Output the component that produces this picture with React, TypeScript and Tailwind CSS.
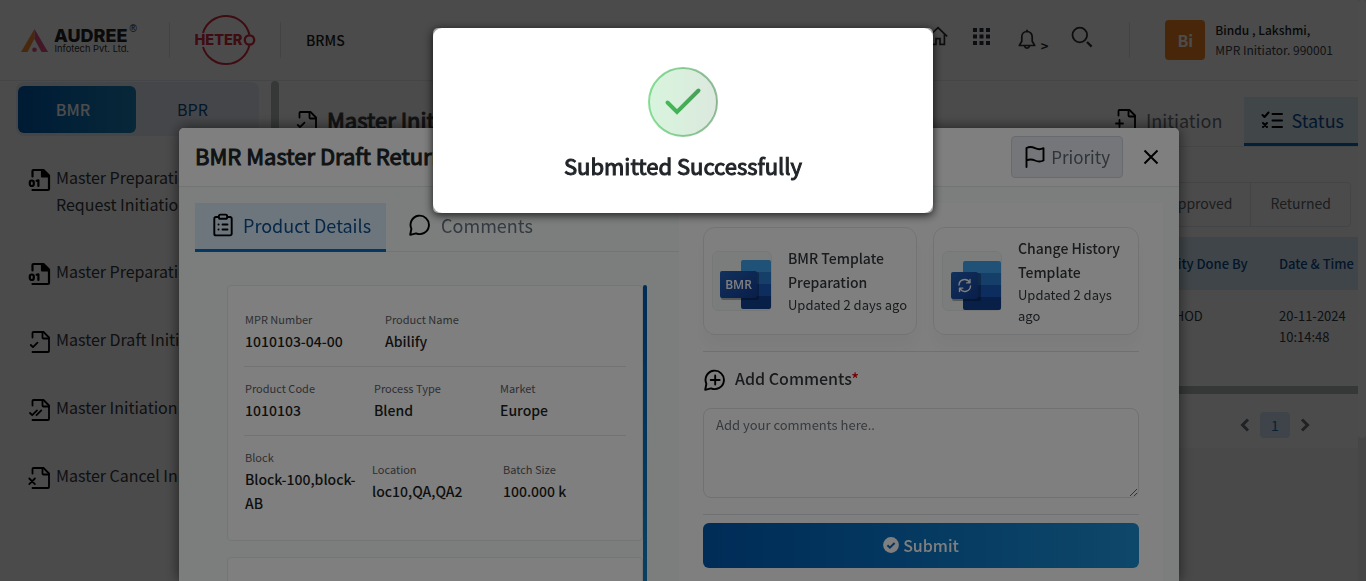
import React from "react";

type IconProps = { className?: string };

/* ---------- icons ---------- */

function FileBase({ className, children }: IconProps & { children?: React.ReactNode }) {
  return (
    <svg viewBox="0 0 24 24" className={className} fill="none" stroke="currentColor" strokeWidth="1.8" strokeLinecap="round" strokeLinejoin="round" aria-hidden="true">
      <path d="M4.500 7.500V3a1 1 0 0 1 1-1h10l5.500 5.500V21a1 1 0 0 1-1 1H4.500" />
      <path d="M14.500 2v5.500a1 1 0 0 0 1 1H21" />
      {children}
    </svg>
  );
}
const FileCheck = (p: IconProps) => (
  <FileBase {...p}><path d="M2.800 15l2.200 2.200 4.500-4.500" /></FileBase>
);
const FileChecks = (p: IconProps) => (
  <FileBase {...p}><path d="M2 15l2.200 2.200 4.800-4.800M8.500 17.200l4.800-4.800" /></FileBase>
);
const FileCross = (p: IconProps) => (
  <FileBase {...p}><path d="M1.300 12.500l5.600 5.600M6.900 12.500l-5.600 5.600" /></FileBase>
);
const FilePlus = (p: IconProps) => (
  <FileBase {...p}><path d="M5.500 12v7M2 15.500h7" /></FileBase>
);
const FileOne = ({ className }: IconProps) => (
  <svg viewBox="0 0 24 24" className={className} fill="none" stroke="currentColor" strokeWidth="2.200" strokeLinecap="round" strokeLinejoin="round" aria-hidden="true">
    <path d="M4.500 8.500V3a1 1 0 0 1 1-1h10l5.500 5.500V21a1 1 0 0 1-1 1H4.500" />
    <path d="M14 2v6.500h7z" fill="currentColor" />
    <rect x="1.800" y="12.500" width="4" height="5.500" rx="2" />
    <path d="M8.600 12.800l1.800-.5V18" />
  </svg>
);
const HomeIcon = ({ className }: IconProps) => (
  <svg viewBox="0 0 24 24" className={className} fill="none" stroke="currentColor" strokeWidth="1.8" aria-hidden="true">
    <path d="M2 12.500L12 3l10 9.500M5 10v11.200h4.800v-6.400h4.400v6.400H19V10" />
  </svg>
);
const GridIcon = ({ className }: IconProps) => (
  <svg viewBox="0 0 17 17" className={className} fill="currentColor" aria-hidden="true">
    {[0, 6.5, 13].map((y) => [0, 6.5, 13].map((x) => <rect key={`${x}-${y}`} x={x} y={y} width="4" height="4" />))}
  </svg>
);
const BellIcon = ({ className }: IconProps) => (
  <svg viewBox="0 0 20 22" className={className} fill="none" stroke="currentColor" strokeWidth="1.700" strokeLinejoin="round" strokeLinecap="round" aria-hidden="true">
    <path d="M10 2.500c-3.200 0-5.200 2.400-5.200 5.400v4.300L2.300 16.500h15.400l-2.500-4.300V7.900c0-3-2-5.400-5.200-5.400zM10 2.500V1.400M7.600 17.300a2.500 2.500 0 0 0 4.800 0" />
  </svg>
);
const SearchIcon = ({ className }: IconProps) => (
  <svg viewBox="0 0 22 22" className={className} fill="none" stroke="currentColor" strokeWidth="1.800" aria-hidden="true">
    <circle cx="8.800" cy="9" r="7.300" />
    <path d="M16 16l4.600 4.600" strokeWidth="2.200" />
  </svg>
);
const ListChecks = ({ className }: IconProps) => (
  <svg viewBox="0 0 22 18" className={className} fill="none" stroke="currentColor" strokeWidth="2" strokeLinecap="round" strokeLinejoin="round" aria-hidden="true">
    <path d="M11.500 3H21M11.500 9.500H21M11.500 16H21M1.500 4l2 2 4-4.500M2 12l4 4M6 12l-4 4" />
  </svg>
);
const ClipboardIcon = ({ className }: IconProps) => (
  <svg viewBox="0 0 20 24" className={className} fill="none" stroke="currentColor" strokeWidth="1.900" strokeLinecap="round" strokeLinejoin="round" aria-hidden="true">
    <path d="M5.500 4H3a1.700 1.700 0 0 0-1.700 1.700v15A1.700 1.700 0 0 0 3 22.400h14a1.700 1.700 0 0 0 1.700-1.700v-15A1.700 1.700 0 0 0 17 4h-2.500" />
    <rect x="5.800" y="1.600" width="8.400" height="4.200" rx="1.600" />
    <path d="M5.500 11.500h.1M9.500 11.500h5M5.500 16.500h.1M9.500 16.500h5" />
  </svg>
);
const ChatIcon = ({ className, plus }: IconProps & { plus?: boolean }) => (
  <svg viewBox="0 0 22 22" className={className} fill="none" stroke="currentColor" strokeWidth="1.900" strokeLinecap="round" strokeLinejoin="round" aria-hidden="true">
    <path d="M1.200 20.800l1.200-6A9.200 9.200 0 1 1 7 19.300z" />
    {plus && <path d="M11.200 6.500v9M6.700 11h9" />}
  </svg>
);
const FlagIcon = ({ className }: IconProps) => (
  <svg viewBox="0 0 20 22" className={className} fill="none" stroke="currentColor" strokeWidth="1.900" strokeLinecap="round" strokeLinejoin="round" aria-hidden="true">
    <path d="M1.500 21V2c3-1.500 6-1 8.500.2s5.500 1.500 8.500 0v12.300c-3 1.500-6 1.200-8.500 0s-5.500-1.500-8.500 0" />
  </svg>
);
const BadgeCheck = ({ className }: IconProps) => (
  <svg viewBox="0 0 16 16" className={className} aria-hidden="true">
    <circle cx="8" cy="8" r="7.900" fill="currentColor" />
    <path d="M4.400 8.200l2.500 2.500 4.700-4.700" fill="none" stroke="#0a69b8" strokeWidth="2" />
  </svg>
);
const Chevron = ({ className, flip }: IconProps & { flip?: boolean }) => (
  <svg viewBox="0 0 10 14" className={className} fill="none" stroke="currentColor" strokeWidth="3" aria-hidden="true">
    <path d={flip ? "M2 1.500L7.500 7 2 12.500" : "M8 1.500L2.500 7 8 12.500"} />
  </svg>
);

function WordFile({ kind }: { kind: "bmr" | "history" }) {
  const bmr = kind === "bmr";
  const left = bmr ? 28 : 20;
  const top = bmr ? 8 : 9;
  return (
    <span className="flex size-[60px] shrink-0 rounded-md border border-[#eaf0ef] bg-[#f7fbfa]">
      <svg viewBox="0 0 58 58" className="size-full" role="img" aria-label={bmr ? "BMR document" : "History document"}>
        <defs>
          <linearGradient id={`wf-${kind}`} x1="0" y1="0" x2="1" y2="1">
            <stop offset="0" stopColor="#2463b8" />
            <stop offset="1" stopColor="#123b96" />
          </linearGradient>
          <clipPath id={`wc-${kind}`}>
            <rect x={left} y={top} width={58 - left} height="49" rx="2" />
          </clipPath>
        </defs>
        <g clipPath={`url(#wc-${kind})`}>
          <rect x={left} y={top} width="40" height="13" fill="#41a5ee" />
          <rect x={left} y={top + 12} width="40" height="13" fill="#2b7cd3" />
          <rect x={left} y={top + 24} width="40" height="13" fill="#185abd" />
          <rect x={left} y={top + 36} width="40" height="13" fill="#103f91" />
        </g>
        <rect x={bmr ? 8 : 9} y={bmr ? 20 : 21} width={bmr ? 38 : 29} height="28" rx="2" fill="#000" opacity=".3" />
        <rect x={bmr ? 7 : 8} y={bmr ? 19 : 20} width={bmr ? 37 : 27} height="27" rx="2" fill={`url(#wf-${kind})`} />
        {bmr ? (
          <text x="25.500" y="37" textAnchor="middle" fontSize="12" fontWeight="600" fill="#fff" fontFamily="Open Sans, sans-serif">BMR</text>
        ) : (
          <g fill="none" stroke="#fff" strokeWidth="1.400" strokeLinecap="round" strokeLinejoin="round">
            <path d="M16 33a5.600 5.600 0 0 1 10.500-2.500M27 27.500v3.400h-3.400M27.500 34a5.600 5.600 0 0 1-10.500 2.500M16.500 39.500v-3.400h3.400" />
          </g>
        )}
      </svg>
    </span>
  );
}

/* ---------- logos ---------- */

const AudreeLogo = () => (
  <svg viewBox="0 0 120 36" className="h-9 w-[120px]" role="img" aria-label="Audree Infotech Pvt. Ltd.">
    <path d="M13.500 7v9.500L6.500 30H0z" fill="#f28a30" />
    <path d="M13.500 7L27 30h-6.500l-7-13z" fill="#e0527f" />
    <circle cx="13.500" cy="27.700" r="2.300" fill="#e0527f" />
    <text x="33" y="19.500" fontSize="18" fontWeight="800" fill="#222" fontFamily="Inter, sans-serif">AUDREE</text>
    <text x="33.500" y="30" fontSize="9.300" fill="#333" fontFamily="Inter, sans-serif">Infotech Pvt. Ltd.</text>
    <text x="108.500" y="9.500" fontSize="10" fontWeight="500" fill="#222" fontFamily="Liberation Sans, sans-serif">®</text>
  </svg>
);
const HeteroLogo = () => (
  <svg viewBox="0 0 62 52" className="h-[52px] w-[62px]" role="img" aria-label="Hetero">
    <g fill="none" stroke="#d22a3c" strokeWidth="2">
      <path d="M8 19A24 24 0 0 1 54.400 20.800M54.400 31.200A24 24 0 0 1 8 33" />
      <circle cx="54.500" cy="26" r="4.700" strokeWidth="2.300" />
    </g>
    <text x="-0.500" y="31.200" fontSize="14.500" fontWeight="800" fill="#d22a3c" fontFamily="Inter, sans-serif">HETER</text>
  </svg>
);

/* ---------- application page ---------- */

const menu = [
  { icon: FileOne, label: "Master Preparation Request Initiation" },
  { icon: FileOne, label: "Master Preparation" },
  { icon: FileCheck, label: "Master Draft Initiation" },
  { icon: FileChecks, label: "Master Initiation" },
  { icon: FileCross, label: "Master Cancel Initiation" },
];

function TopBar() {
  return (
    <header className="flex h-[81px] shrink-0 items-center justify-between border-b border-[#e4e7ea] pr-[25px] pl-[21px]">
      <div className="flex items-center">
        <AudreeLogo />
        <span className="ml-7 h-9 w-px bg-[#dcdfe2]" />
        <span className="ml-[25px]"><HeteroLogo /></span>
        <span className="ml-[23px] h-9 w-px bg-[#dcdfe2]" />
        <span className="ml-[25px] text-sm leading-5 font-medium text-[#1b1d20]">BRMS</span>
      </div>
      <div className="flex items-center text-[#2a2d33]">
        <a href="#home" aria-label="Home" className="mr-6 pb-2"><HomeIcon className="size-[22px]" /></a>
        <a href="#apps" aria-label="Apps" className="pb-[7px]"><GridIcon className="size-[17px]" /></a>
        <a href="#alerts" aria-label="Notifications" className="ml-[27px] flex items-end">
          <BellIcon className="mb-[9px] h-[22px] w-5" />
          <span className="mt-5 mb-2 ml-1 text-[13px] leading-3 font-bold">&gt;</span>
        </a>
        <a href="#search" aria-label="Search" className="ml-[23px] pb-[7px]"><SearchIcon className="size-[22px]" /></a>
        <span className="ml-9 h-9 w-px bg-[#dcdfe2]" />
        <span className="ml-[35px] flex size-10 items-center justify-center rounded bg-[#ee8024] text-base font-bold text-white">Bi</span>
        <div className="ml-[10px] pb-px">
          <p className="text-xs leading-5 font-medium text-[#1b1d20]">Bindu , Lakshmi,</p>
          <p className="text-xs leading-5 text-[#3c4147]">MPR Initiator. 990001</p>
        </div>
      </div>
    </header>
  );
}

function Sidebar() {
  return (
    <aside className="w-[271px] shrink-0 pt-px pl-4">
      <div className="mr-3 flex h-[54px] rounded-lg bg-[#e6ecf5] px-[2px] pt-1 pb-[3px] text-base">
        <button className="w-[118px] rounded-md bg-linear-to-r from-[#005bb0] to-[#1b86bf] pr-2 pb-px font-medium text-white">BMR</button>
        <button className="flex-1 pr-2 pb-px text-[#0b4f8f]">BPR</button>
      </div>
      <nav className="mt-[29px] flex flex-col gap-[41px] pl-3">
        {menu.map(({ icon: Icon, label }) => (
          <a key={label} href="#menu" className="flex gap-1 text-base leading-[27px] text-[#33373c]">
            <Icon className="mt-[3px] size-6 shrink-0 text-black" />
            <span className="-mt-px w-[190px]">{label}</span>
          </a>
        ))}
      </nav>
    </aside>
  );
}

function MainPage() {
  return (
    <main className="min-w-0 flex-1 overflow-hidden bg-[#f4f4f4]">
      <div className="bg-[#fcfcfc] pb-[10px]">
        <div className="flex items-end border-b border-[#e6e9ec] pt-4 pl-4">
          <FileCheck className="mb-3 size-6" />
          <h1 className="mb-[13px] ml-2 flex-1 text-[22px] leading-7 text-[#3b4046] [-webkit-text-stroke:1px]">Master Initiation</h1>
          <button className="flex h-12 items-center gap-2 pr-[22px] pb-1 text-lg text-[#6a7078]"><FilePlus className="size-6 text-black" />Initiation</button>
          <button className="flex h-[49px] items-center gap-2 border-b-[3px] border-[#0c6cbc] bg-[#dbeaf6] pr-[14px] pb-px pl-[17px] text-lg text-[#0a4f93]"><ListChecks className="h-[18px] w-[22px] text-black" />Status</button>
        </div>
        <div className="mt-[35px] mr-[7px] mb-[10px] flex justify-end text-sm text-[#5d6268]">
          <div className="flex h-[45px] rounded border border-[#e0e3e6]">
            <button className="px-[18px] pb-[3px]">Approved</button>
            <button className="border-l border-[#e0e3e6] px-[19px] pb-[3px]">Returned</button>
          </div>
        </div>
        <table className="w-full text-[13px]">
          <thead>
            <tr className="h-[53px] bg-[#d6e8f6] text-left text-[#0a4a8c]">
              <th className="pl-4 font-medium">Product</th>
              <th className="w-[132px] font-medium">Activity Done By</th>
              <th className="w-[79px] font-medium whitespace-nowrap">Date &amp; Time</th>
            </tr>
          </thead>
          <tbody>
            <tr className="h-24 align-top leading-[21px] text-[#33373c]">
              <td />
              <td className="pt-[15px]">QA - HOD</td>
              <td className="pt-[15px]">20-11-2024 10:14:48</td>
            </tr>
          </tbody>
        </table>
        <div className="h-2 bg-[#b4b9b9]" />
        <div className="mt-[18px] mr-12 flex items-center justify-end gap-[10px] text-[#6d7277]">
          <button aria-label="Previous page"><Chevron className="h-[14px] w-[10px]" /></button>
          <button className="h-[26px] w-[30px] rounded bg-[#cfe3f3] text-sm text-[#1a6fb0]">1</button>
          <button aria-label="Next page"><Chevron flip className="h-[14px] w-[10px]" /></button>
        </div>
      </div>
    </main>
  );
}

/* ---------- draft dialog ---------- */

type Field = [string, string];
const Fields = ({ items, cols, last }: { items: Field[]; cols: string; last?: boolean }) => (
  <dl className={`grid items-center pt-[11px] pb-[13px] pl-px ${cols} ${last ? "" : "border-b border-[#e3e6e8]"}`}>
    {items.map(([k, v]) => (
      <div key={k}>
        <dt className="text-[11px] leading-5 text-[#5b6066]">{k}</dt>
        <dd className="text-sm leading-6 font-medium text-[#1c1e21]">{v}</dd>
      </div>
    ))}
  </dl>
);

function DraftDialog() {
  return (
    <section role="dialog" aria-label="BMR Master Draft Returned" className="mt-32 flex w-[1000px] flex-col overflow-hidden rounded-t-[5px] bg-[#f6fcfa] shadow-[0_0_14px_rgba(0,0,0,0.6)]">
      <header className="flex h-[59px] shrink-0 items-center border-b border-[#e4e9e8] bg-white px-4">
        <h2 className="flex-1 pb-1 text-[22px] leading-8 text-[#212529] [-webkit-text-stroke:1px]">BMR Master Draft Returned</h2>
        <button className="flex h-[42px] items-center gap-[6px] rounded border border-[#cfd4dc] bg-[#e9edf3] pr-3 pl-[11px] text-[17px] leading-6 text-[#5f6873]"><FlagIcon className="ml-[2px] h-[22px] w-5 text-black" />Priority</button>
        <button aria-label="Close" className="mr-1 ml-5 text-black">
          <svg viewBox="0 0 16 16" className="size-4" fill="none" stroke="currentColor" strokeWidth="2"><path d="M1.500 1.500l13 13M14.500 1.500l-13 13" /></svg>
        </button>
      </header>
      <div className="flex min-h-0 flex-1 px-4 pt-4">
        <div className="flex flex-1 flex-col">
          <div className="flex h-[49px] shrink-0 border-b border-[#e4eae9] text-lg">
            <button className="flex h-[49px] items-center gap-[10px] border-b-[3px] border-[#0871c0] bg-[#d9ecf9] pr-[15px] pb-[2px] pl-[18px] text-[#0d4f8f]"><ClipboardIcon className="h-6 w-5 text-black" />Product Details</button>
            <button className="flex h-[46px] items-center gap-[10px] pb-[2px] pl-[23px] text-[#6b7280]"><ChatIcon className="size-[22px] text-black" />Comments</button>
          </div>
          <div className="mt-[33px] mr-8 ml-8 flex min-h-0 flex-1 overflow-hidden">
            <div className="flex flex-1 flex-col gap-4">
              <article className="shrink-0 rounded border border-[#e6ecea] bg-white px-4 py-3">
                <Fields cols="grid-cols-[140px_1fr]" items={[["MPR Number", "1010103-04-00"], ["Product Name", "Abilify"]]} />
                <Fields cols="grid-cols-[129px_126px_1fr]" items={[["Product Code", "1010103"], ["Process Type", "Blend"], ["Market", "Europe"]]} />
                <Fields last cols="grid-cols-[127px_131px_1fr]" items={[["Block", "Block-100,block-AB"], ["Location", "loc10,QA,QA2"], ["Batch Size", "100.000 k"]]} />
              </article>
              <article className="h-40 shrink-0 rounded border border-[#e6ecea] bg-white" />
            </div>
            <div className="w-1 shrink-0 rounded-t bg-linear-to-b from-[#0059b1] to-[#1280c4]" />
          </div>
        </div>
        <div className="w-[484px] shrink-0 bg-white p-6">
          <div className="flex gap-4">
            <a href="#bmr-template" className="flex h-[108px] w-[214px] items-center gap-4 rounded-xl border border-[#e4e7e9] pr-2 pl-2 shadow-[0_12px_16px_rgba(0,0,0,0.03)]">
              <WordFile kind="bmr" />
              <span className="pb-[2px] text-[13px] leading-[21px] whitespace-nowrap text-[#33373b]"><b className="block text-sm leading-6 font-medium whitespace-normal">BMR Template Preparation</b>Updated 2 days ago</span>
            </a>
            <a href="#history-template" className="flex h-[108px] flex-1 items-center gap-4 rounded-xl border border-[#e4e7e9] pr-4 pl-2 shadow-[0_12px_16px_rgba(0,0,0,0.03)]">
              <WordFile kind="history" />
              <span className="pb-px text-[13px] leading-[21px] text-[#33373b]"><b className="block text-sm leading-6 font-medium">Change History Template</b>Updated 2 days ago</span>
            </a>
          </div>
          <div className="mt-4 border-t border-[#dfe2e4] pt-[14px]">
            <label htmlFor="comments" className="flex h-6 items-center gap-[9px] pl-px text-base font-medium text-[#33373b]">
              <ChatIcon plus className="mt-[3px] size-[22px] text-black" />
              <span>Add Comments<span className="text-red-600">*</span></span>
            </label>
            <textarea id="comments" placeholder="Add your comments here.." className="mt-[18px] block h-[90px] w-full rounded-lg border border-[#dee2e6] bg-white px-3 py-[6px] text-[13px] leading-5 placeholder:text-[#6c757d]" />
          </div>
          <div className="mt-4 border-t border-[#dfe2e4] pt-2">
            <button className="flex h-[45px] w-full items-center justify-center gap-1 rounded-md bg-linear-to-r from-[#0058b0] to-[#1c8fd4] pb-px text-base font-medium text-white"><BadgeCheck className="size-4" />Submit</button>
          </div>
        </div>
      </div>
    </section>
  );
}

function SuccessDialog() {
  return (
    <section role="alertdialog" aria-labelledby="done" className="mt-7 w-[500px] rounded-[5px] bg-[#a5a5a5] shadow-[0_2px_10px_rgba(0,0,0,0.8)]">
      <div className="flex h-[185px] flex-col items-center rounded-[9px] bg-white pt-[39px]">
        <svg viewBox="0 0 70 70" className="size-[70px]" fill="none" aria-hidden="true">
          <defs>
            <linearGradient id="ok" gradientUnits="userSpaceOnUse" x1="0" y1="0" x2="70" y2="0">
              <stop offset="0" stopColor="#3ccb55" />
              <stop offset="1" stopColor="#4f8f5a" />
            </linearGradient>
          </defs>
          <circle cx="35" cy="35" r="34" fill="url(#ok)" fillOpacity=".2" />
          <circle cx="35" cy="35" r="34" stroke="url(#ok)" strokeOpacity=".6" strokeWidth="2" />
          <path d="M19.500 35.500L29 45 50.500 23.500" stroke="url(#ok)" strokeWidth="4" strokeLinecap="round" />
        </svg>
        <p id="done" className="mt-[10px] text-[22px] leading-9 text-[#212529] [-webkit-text-stroke:1px]">Submitted Successfully</p>
      </div>
    </section>
  );
}

export default function App() {
  return (
    <div className="relative h-screen overflow-hidden bg-[#fafafa] font-['Noto_Sans_CJK_JP',sans-serif]">
      <div className="flex h-full">
        <div className="flex min-w-0 flex-1 flex-col">
          <TopBar />
          <div className="flex min-h-0 flex-1">
            <Sidebar />
            <div className="h-96 w-2 shrink-0 rounded bg-[#b5bbbb]" />
            <MainPage />
          </div>
        </div>
        <div className="w-2 bg-[#e9e9e9]">
          <div className="h-[438px] rounded bg-white" />
        </div>
      </div>
      <div className="fixed inset-0 flex justify-center bg-black/40 pr-2"><DraftDialog /></div>
      <div className="fixed inset-0 flex items-start justify-center bg-black/50"><SuccessDialog /></div>
    </div>
  );
}
